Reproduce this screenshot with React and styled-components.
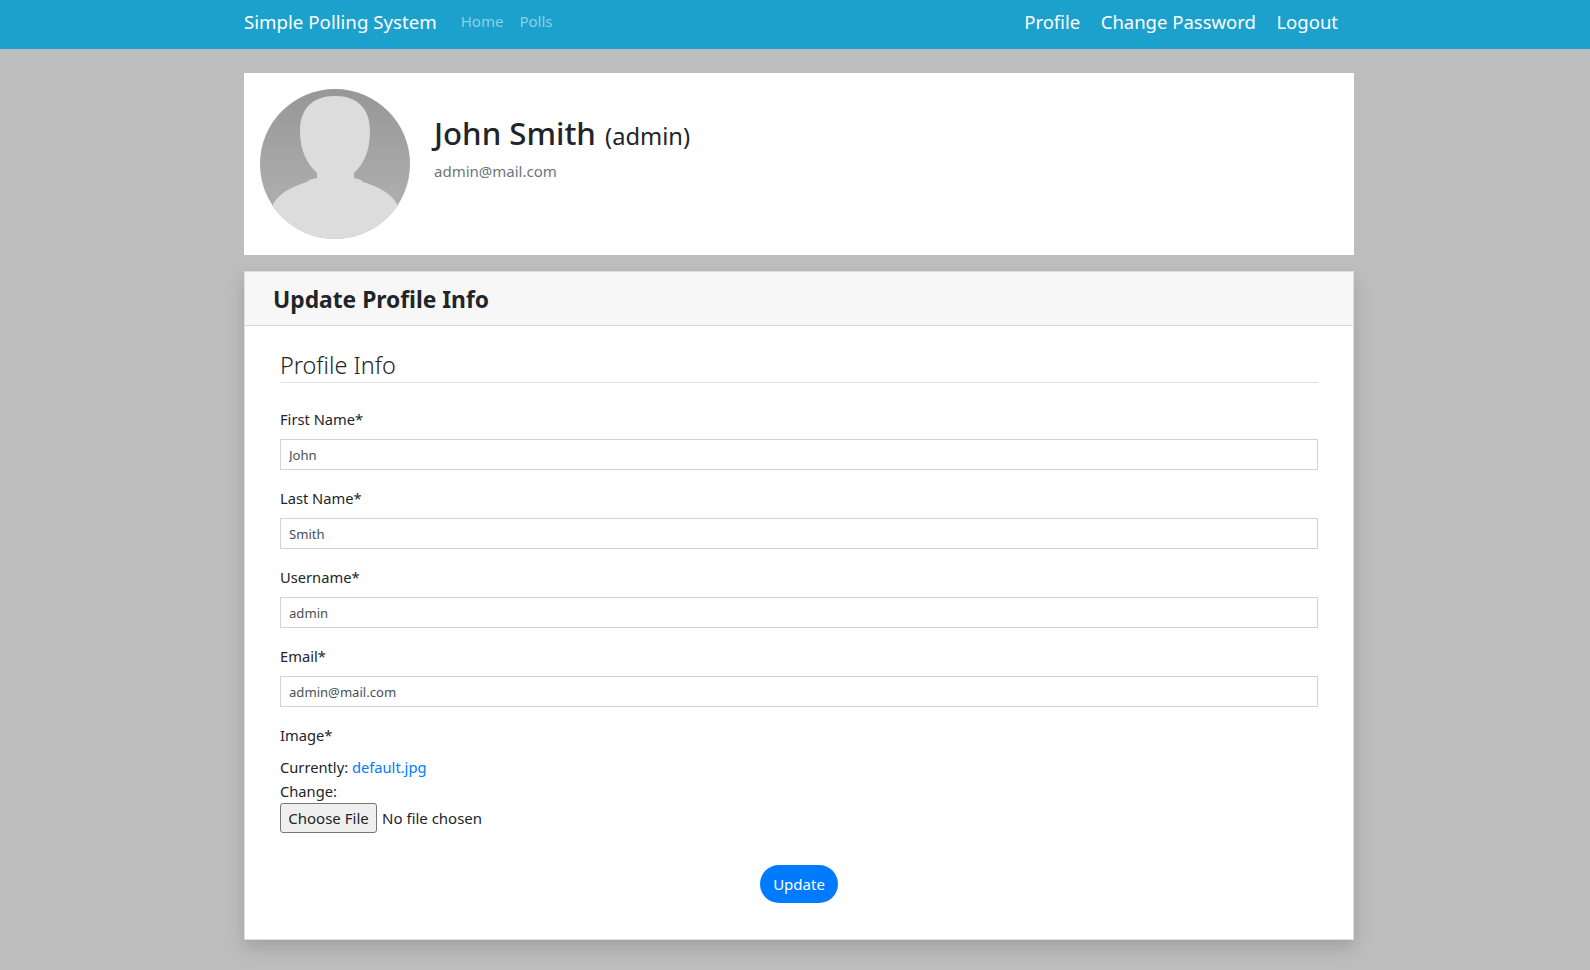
import React from 'react'
import styled, { createGlobalStyle } from 'styled-components'

const GlobalStyle = createGlobalStyle`
    html, body {
        margin: 0;
        padding: 0;
        height: 100%;
        background: #bdbdbd;
    }
    body {
        font-family: "Noto Sans", "Open Sans", sans-serif;
        font-size: 14.7px;
        line-height: 24px;
        color: #212529;
    }
    * {
        box-sizing: border-box;
    }
`

const fields = [
    { label: 'First Name*', value: 'John' },
    { label: 'Last Name*', value: 'Smith' },
    { label: 'Username*', value: 'admin' },
    { label: 'Email*', value: 'admin@mail.com' },
]

function Avatar() {
    return (
        <AvatarSvg viewBox="0 0 150 150">
            <defs>
                <linearGradient id="avatarBg" x1="0" y1="0" x2="0" y2="1">
                    <stop offset="0" stopColor="#979797" />
                    <stop offset="0.7" stopColor="#acacac" />
                </linearGradient>
                <clipPath id="avatarClip">
                    <circle cx="75" cy="75" r="75" />
                </clipPath>
            </defs>
            <circle cx="75" cy="75" r="75" fill="url(#avatarBg)" />
            <path
                clipPath="url(#avatarClip)"
                fill="#dcdcdc"
                d="M75 7C98 7 110 20 110 42C110 60 105 74 94 84L94 89L101 91L103 93C116 97 130 103 137 115L137 150L13 150L13 115C20 103 34 97 47 93L49 91L57 89L57 84C46 74 40 60 40 42C40 20 52 7 75 7Z"
            />
        </AvatarSvg>
    )
}

export default function App() {
    return (
        <>
            <GlobalStyle />
            <Nav>
                <NavInner>
                    <Brand href="#">Simple Polling System</Brand>
                    <NavLinks>
                        <NavLink href="#">Home</NavLink>
                        <NavLink href="#">Polls</NavLink>
                    </NavLinks>
                    <UserLinks>
                        <UserLink href="#">Profile</UserLink>
                        <UserLink href="#">Change Password</UserLink>
                        <UserLink href="#">Logout</UserLink>
                    </UserLinks>
                </NavInner>
            </Nav>
            <Main>
                <ProfileCard>
                    <Avatar />
                    <ProfileText>
                        <Name>
                            John Smith <Role>(admin)</Role>
                        </Name>
                        <Mail>admin@mail.com</Mail>
                    </ProfileText>
                </ProfileCard>
                <FormCard>
                    <CardHeader>Update Profile Info</CardHeader>
                    <CardBody>
                        <Legend>Profile Info</Legend>
                        {fields.map((f) => (
                            <FormGroup key={f.label}>
                                <Label>{f.label}</Label>
                                <Input type="text" defaultValue={f.value} />
                            </FormGroup>
                        ))}
                        <Label>Image*</Label>
                        <FileBlock>
                            <div>
                                Currently: <FileLink href="#">default.jpg</FileLink>
                            </div>
                            <div>Change:</div>
                            <FileInput type="file" />
                        </FileBlock>
                        <Actions>
                            <UpdateButton type="button">Update</UpdateButton>
                        </Actions>
                    </CardBody>
                </FormCard>
            </Main>
        </>
    )
}

const Nav = styled.nav`
    height: 49px;
    background: #1ca1cd;
`
const NavInner = styled.div`
    width: 1110px;
    height: 100%;
    margin-left: 244px;
    display: flex;
    align-items: center;
`
const Brand = styled.a`
    font-size: 18.7px;
    color: #fff;
    text-decoration: none;
    margin-right: 24px;
    padding-bottom: 5px;
`
const NavLinks = styled.div`
    display: flex;
    gap: 16px;
    padding-bottom: 7px;
`
const NavLink = styled.a`
    font-size: 15px;
    color: rgba(255, 255, 255, 0.5);
    text-decoration: none;
`
const UserLinks = styled.div`
    margin-left: auto;
    padding-right: 16px;
    padding-bottom: 5px;
    display: flex;
    gap: 20.5px;
`
const UserLink = styled.a`
    font-size: 18.5px;
    color: #fff;
    text-decoration: none;
`
const Main = styled.main`
    width: 1110px;
    margin-left: 244px;
    padding-top: 24px;
`
const ProfileCard = styled.section`
    height: 182px;
    background: #fff;
    padding: 16px;
    display: flex;
    gap: 24px;
`
const AvatarSvg = styled.svg`
    width: 150px;
    height: 150px;
    flex: none;
`
const ProfileText = styled.div`
    padding-top: 23px;
`
const Name = styled.h1`
    margin: 0;
    font-size: 31.2px;
    line-height: 42px;
    font-weight: 500;
`
const Role = styled.span`
    margin-left: 1px;
    font-size: 23.7px;
    font-weight: 400;
`
const Mail = styled.div`
    margin-top: 2px;
    font-size: 15px;
    color: #6c757d;
`
const FormCard = styled.section`
    margin-top: 16px;
    height: 669px;
    background: #fff;
    border: 1px solid rgba(0, 0, 0, 0.125);
    box-shadow: 0 8px 16px rgba(0, 0, 0, 0.15);
`
const CardHeader = styled.h2`
    margin: 0;
    height: 54px;
    padding: 2px 28px 0;
    display: flex;
    align-items: center;
    font-size: 22.8px;
    font-weight: 700;
    background: #f7f7f7;
    border-bottom: 1px solid rgba(0, 0, 0, 0.125);
`
const CardBody = styled.div`
    padding: 20px 35px 0;
`
const Legend = styled.h3`
    margin: 0 0 24px;
    height: 37px;
    padding-top: 1px;
    font-size: 23.4px;
    line-height: 36px;
    font-weight: 300;
    border-bottom: 1px solid #dee2e6;
`
const FormGroup = styled.div`
    margin-bottom: 16px;
`
const Label = styled.label`
    display: block;
    margin-bottom: 8px;
`
const Input = styled.input`
    display: block;
    width: 100%;
    height: 31px;
    padding: 4px 8px;
    font-family: inherit;
    font-size: 13.1px;
    color: #495057;
    background: #fff;
    border: 1px solid #ced4da;
    outline: none;
`
const FileBlock = styled.div``
const FileLink = styled.a`
    color: #007bff;
    text-decoration: none;
`
const FileInput = styled.input`
    display: block;
    height: 30px;
    font-family: inherit;
    font-size: 15px;
    &::file-selector-button {
        height: 30px;
        width: 97px;
        padding: 0;
        margin-right: 5px;
        font-family: inherit;
        font-size: 15px;
        color: #212529;
        background: #efefef;
        border: 1px solid #767676;
        border-radius: 3px;
    }
`
const Actions = styled.div`
    display: flex;
    justify-content: center;
    margin-top: 32px;
`
const UpdateButton = styled.button`
    width: 78px;
    height: 38px;
    border: none;
    border-radius: 19px;
    background: #007bff;
    color: #fff;
    font-family: inherit;
    font-size: 15px;
`
